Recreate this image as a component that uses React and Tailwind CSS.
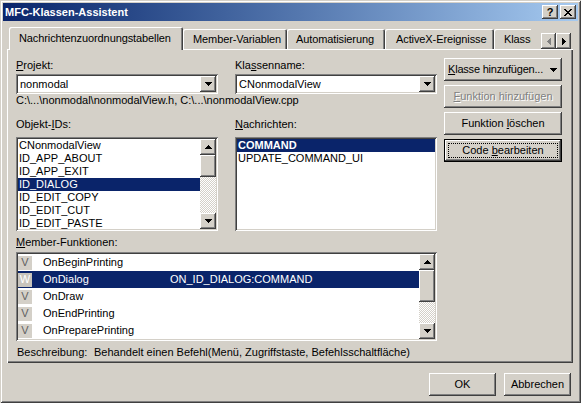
import React from "react";

const RAISED =
  "shadow-[inset_-1px_-1px_0_#404040,inset_1px_1px_0_#ffffff,inset_-2px_-2px_0_#808080,inset_2px_2px_0_#d4d0c8]";
const SUNKEN =
  "shadow-[inset_1px_1px_0_#808080,inset_-1px_-1px_0_#ffffff,inset_2px_2px_0_#404040,inset_-2px_-2px_0_#d4d0c8]";

function Tri({ dir = "down", color = "#000" }) {
  if (dir === "down")
    return (
      <svg width="7" height="4" viewBox="0 0 7 4" shapeRendering="crispEdges">
        <rect x="0" y="0" width="7" height="1" fill={color} />
        <rect x="1" y="1" width="5" height="1" fill={color} />
        <rect x="2" y="2" width="3" height="1" fill={color} />
        <rect x="3" y="3" width="1" height="1" fill={color} />
      </svg>
    );
  if (dir === "up")
    return (
      <svg width="7" height="4" viewBox="0 0 7 4" shapeRendering="crispEdges">
        <rect x="3" y="0" width="1" height="1" fill={color} />
        <rect x="2" y="1" width="3" height="1" fill={color} />
        <rect x="1" y="2" width="5" height="1" fill={color} />
        <rect x="0" y="3" width="7" height="1" fill={color} />
      </svg>
    );
  if (dir === "left")
    return (
      <svg width="4" height="7" viewBox="0 0 4 7" shapeRendering="crispEdges">
        <rect x="0" y="3" width="1" height="1" fill={color} />
        <rect x="1" y="2" width="1" height="3" fill={color} />
        <rect x="2" y="1" width="1" height="5" fill={color} />
        <rect x="3" y="0" width="1" height="7" fill={color} />
      </svg>
    );
  return (
    <svg width="4" height="7" viewBox="0 0 4 7" shapeRendering="crispEdges">
      <rect x="0" y="0" width="1" height="7" fill={color} />
      <rect x="1" y="1" width="1" height="5" fill={color} />
      <rect x="2" y="2" width="1" height="3" fill={color} />
      <rect x="3" y="3" width="1" height="1" fill={color} />
    </svg>
  );
}

function Combo({ value }) {
  return (
    <div className={`w-[202px] h-[20px] bg-white p-[2px] flex ${SUNKEN}`}>
      <div className="flex-1 pl-[2px] flex items-center">{value}</div>
      <div className={`w-[16px] h-full bg-[#d4d0c8] flex items-center justify-center ${RAISED}`}>
        <Tri dir="down" />
      </div>
    </div>
  );
}

function Scrollbar({ thumb }) {
  return (
    <div className="w-[16px] h-full flex flex-col">
      <div className={`w-[16px] h-[16px] bg-[#d4d0c8] flex items-center justify-center ${RAISED}`}>
        <Tri dir="up" />
      </div>
      <div className={`w-[16px] bg-[#d4d0c8] ${RAISED}`} style={{ height: thumb }} />
      <div className="flex-1 bg-[image:repeating-conic-gradient(#ffffff_0%_25%,#d4d0c8_0%_50%)] bg-[length:2px_2px]" />
      <div className={`w-[16px] h-[16px] bg-[#d4d0c8] flex items-center justify-center ${RAISED}`}>
        <Tri dir="down" />
      </div>
    </div>
  );
}

function Btn({ children, w = "w-[118px]", h = "h-[23px]", disabled, isDefault, className = "" }) {
  if (isDefault) {
    return (
      <div className={`${w} ${h} border border-black bg-[#d4d0c8] ${className}`}>
        <div className={`w-full h-full p-[3px] ${RAISED}`}>
          <div className="w-full h-full border border-dotted border-black flex items-center justify-center whitespace-nowrap">
            {children}
          </div>
        </div>
      </div>
    );
  }
  return (
    <div
      className={`${w} ${h} bg-[#d4d0c8] flex items-center justify-center whitespace-nowrap ${RAISED} ${
        disabled ? "text-[#808080] [text-shadow:1px_1px_0_#ffffff]" : ""
      } ${className}`}
    >
      {children}
    </div>
  );
}

const objIds = [
  "CNonmodalView",
  "ID_APP_ABOUT",
  "ID_APP_EXIT",
  "ID_DIALOG",
  "ID_EDIT_COPY",
  "ID_EDIT_CUT",
  "ID_EDIT_PASTE",
];

const members = [
  ["V", "OnBeginPrinting", ""],
  ["W", "OnDialog", "ON_ID_DIALOG:COMMAND"],
  ["V", "OnDraw", ""],
  ["V", "OnEndPrinting", ""],
  ["V", "OnPreparePrinting", ""],
];

const TAB_INACTIVE =
  "h-[20px] mb-[1px] pt-[4px] whitespace-nowrap shadow-[inset_1px_1px_0_#ffffff,inset_-1px_0_0_#404040,inset_-2px_0_0_#808080] rounded-t-[2px]";

export default function App() {
  return (
    <div className="w-[581px] h-[403px] bg-[#d4d0c8] overflow-hidden font-['Liberation_Sans',Arial,sans-serif] text-[11px] leading-[13px] text-black p-[3px] flex flex-col shadow-[inset_1px_1px_0_#d4d0c8,inset_-1px_-1px_0_#404040,inset_2px_2px_0_#ffffff,inset_-2px_-2px_0_#808080]">
      {/* Title bar */}
      <div className="h-[18px] flex items-center bg-linear-to-r from-[#0a246a] to-[#a6caf0] shrink-0">
        <div className="pl-[2px] font-bold text-white text-[11px]">MFC-Klassen-Assistent</div>
        <div className="ml-auto mr-[2px] flex gap-[2px]">
          <div className={`w-[16px] h-[14px] bg-[#d4d0c8] flex items-center justify-center font-bold text-[11px] leading-[11px] ${RAISED}`}>
            ?
          </div>
          <div className={`w-[16px] h-[14px] bg-[#d4d0c8] flex items-center justify-center ${RAISED}`}>
            <svg width="8" height="7" viewBox="0 0 8 7" shapeRendering="crispEdges">
              <path d="M0 0h2v1h-2zM6 0h2v1h-2zM1 1h2v1h-2zM5 1h2v1h-2zM2 2h4v1h-4zM3 3h2v1h-2zM2 4h4v1h-4zM1 5h2v1h-2zM5 5h2v1h-2zM0 6h2v1h-2zM6 6h2v1h-2z" fill="#000" />
            </svg>
          </div>
        </div>
      </div>

      {/* Body */}
      <div className="pl-[4px] pt-[7px] flex flex-col">
        {/* Tabs */}
        <div className="h-[22px] flex items-end relative z-10 -mb-[1px] w-[566px] tracking-[-0.1px]">
          <div className="ml-[2px] w-[174px] h-[23px] bg-[#d4d0c8] pl-[10px] pt-[5px] whitespace-nowrap shadow-[inset_1px_1px_0_#ffffff,inset_-1px_0_0_#404040,inset_-2px_0_0_#808080] rounded-t-[2px]">
            Nachrichtenzuordnungstabellen
          </div>
          <div className={`w-[104px] pl-[10px] ${TAB_INACTIVE}`}>Member-Variablen</div>
          <div className={`w-[98px] pl-[9px] ${TAB_INACTIVE}`}>Automatisierung</div>
          <div className={`w-[109px] pl-[11px] ${TAB_INACTIVE}`}>ActiveX-Ereignisse</div>
          <div className="w-[37px] h-[20px] mb-[1px] pl-[10px] pt-[4px] overflow-hidden whitespace-nowrap shadow-[inset_1px_1px_0_#ffffff] rounded-tl-[2px]">
            Klassen-Info
          </div>
          <div className="ml-auto mr-[2px] mb-[1px] flex">
            <div className={`w-[15px] h-[16px] bg-[#d4d0c8] flex items-center justify-center ${RAISED}`}>
              <Tri dir="left" color="#808080" />
            </div>
            <div className={`w-[15px] h-[16px] bg-[#d4d0c8] flex items-center justify-center ${RAISED}`}>
              <Tri dir="right" />
            </div>
          </div>
        </div>

        {/* Panel */}
        <div className="w-[566px] h-[314px] flex gap-[7px] pl-[9px] shadow-[inset_1px_1px_0_#ffffff,inset_-1px_-1px_0_#404040,inset_-2px_-2px_0_#808080]">
          {/* Left area */}
          <div className="w-[421px] flex flex-col pt-[10px]">
            <div className="flex gap-[17px]">
              <div className="w-[202px] flex flex-col">
                <div>
                  <span className="underline">P</span>rojekt:
                </div>
                <div className="mt-[2px]">
                  <Combo value="nonmodal" />
                </div>
              </div>
              <div className="w-[202px] flex flex-col">
                <div>
                  Kla<span className="underline">s</span>senname:
                </div>
                <div className="mt-[2px]">
                  <Combo value="CNonmodalView" />
                </div>
              </div>
            </div>
            <div className="whitespace-nowrap">
              C:\...\nonmodal\nonmodalView.h, C:\...\nonmodalView.cpp
            </div>

            <div className="flex gap-[17px] mt-[11px]">
              <div className="w-[202px] flex flex-col">
                <div>
                  Objekt-<span className="underline">I</span>Ds:
                </div>
                <div className={`mt-[6px] w-[202px] h-[94px] bg-white p-[2px] flex ${SUNKEN}`}>
                  <div className="flex-1 overflow-hidden">
                    {objIds.map((t) => (
                      <div
                        key={t}
                        className={`h-[13px] pl-[1px] leading-[13px] ${
                          t === "ID_DIALOG" ? "bg-[#0a246a] text-white" : ""
                        }`}
                      >
                        {t}
                      </div>
                    ))}
                  </div>
                  <Scrollbar thumb={22} />
                </div>
              </div>
              <div className="w-[202px] flex flex-col">
                <div>
                  <span className="underline">N</span>achrichten:
                </div>
                <div className={`mt-[6px] w-[202px] h-[94px] bg-white p-[2px] flex flex-col ${SUNKEN}`}>
                  <div className="h-[13px] pl-[1px] bg-[#0a246a] text-white font-bold">COMMAND</div>
                  <div className="h-[13px] pl-[1px]">UPDATE_COMMAND_UI</div>
                </div>
              </div>
            </div>

            <div className="mt-[5px]">
              <span className="underline">M</span>ember-Funktionen:
            </div>
            <div className={`mt-[3px] w-[421px] h-[89px] bg-white p-[2px] flex ${SUNKEN}`}>
              <div className="flex-1 overflow-hidden">
                {members.map(([k, n, h]) => {
                  const sel = n === "OnDialog";
                  return (
                    <div
                      key={n}
                      className={`h-[17px] flex items-center ${sel ? "bg-[#0a246a] text-white" : ""}`}
                    >
                      <div
                        className={`w-[14px] h-[14px] flex items-center justify-center ${
                          sel ? "bg-[#c8c4bc] text-white" : "bg-[#d4d0c8] text-[#606060]"
                        }`}
                      >
                        {k}
                      </div>
                      <div className="ml-[11px] w-[127px] whitespace-nowrap">{n}</div>
                      <div className="whitespace-nowrap">{h}</div>
                    </div>
                  );
                })}
              </div>
              <Scrollbar thumb={32} />
            </div>

            <div className="mt-[5px] flex whitespace-nowrap">
              <div className="w-[78px] pl-[1px]">Beschreibung:</div>
              <div>Behandelt einen Befehl(Menü, Zugriffstaste, Befehlsschaltfläche)</div>
            </div>
          </div>

          {/* Right buttons */}
          <div className="pt-[9px] flex flex-col gap-[4px]">
            <Btn>
              <div className="w-full flex items-center pl-[4px] pr-[5px]">
                <span className="tracking-[-0.2px]">
                  <span className="underline">K</span>lasse hinzufügen...
                </span>
                <span className="ml-auto flex">
                  <Tri dir="down" />
                </span>
              </div>
            </Btn>
            <Btn disabled>
              <span>
                <span className="underline">F</span>unktion hinzufügen
              </span>
            </Btn>
            <Btn>
              <span>
                Funktion <span className="underline">l</span>öschen
              </span>
            </Btn>
            <Btn isDefault>
              <span>
                Code <span className="underline">b</span>earbeiten
              </span>
            </Btn>
          </div>
        </div>

        {/* Footer */}
        <div className="mt-[10px] flex justify-end gap-[8px] pr-[7px]">
          <Btn w="w-[67px]">OK</Btn>
          <Btn w="w-[67px]">Abbrechen</Btn>
        </div>
      </div>
    </div>
  );
}
